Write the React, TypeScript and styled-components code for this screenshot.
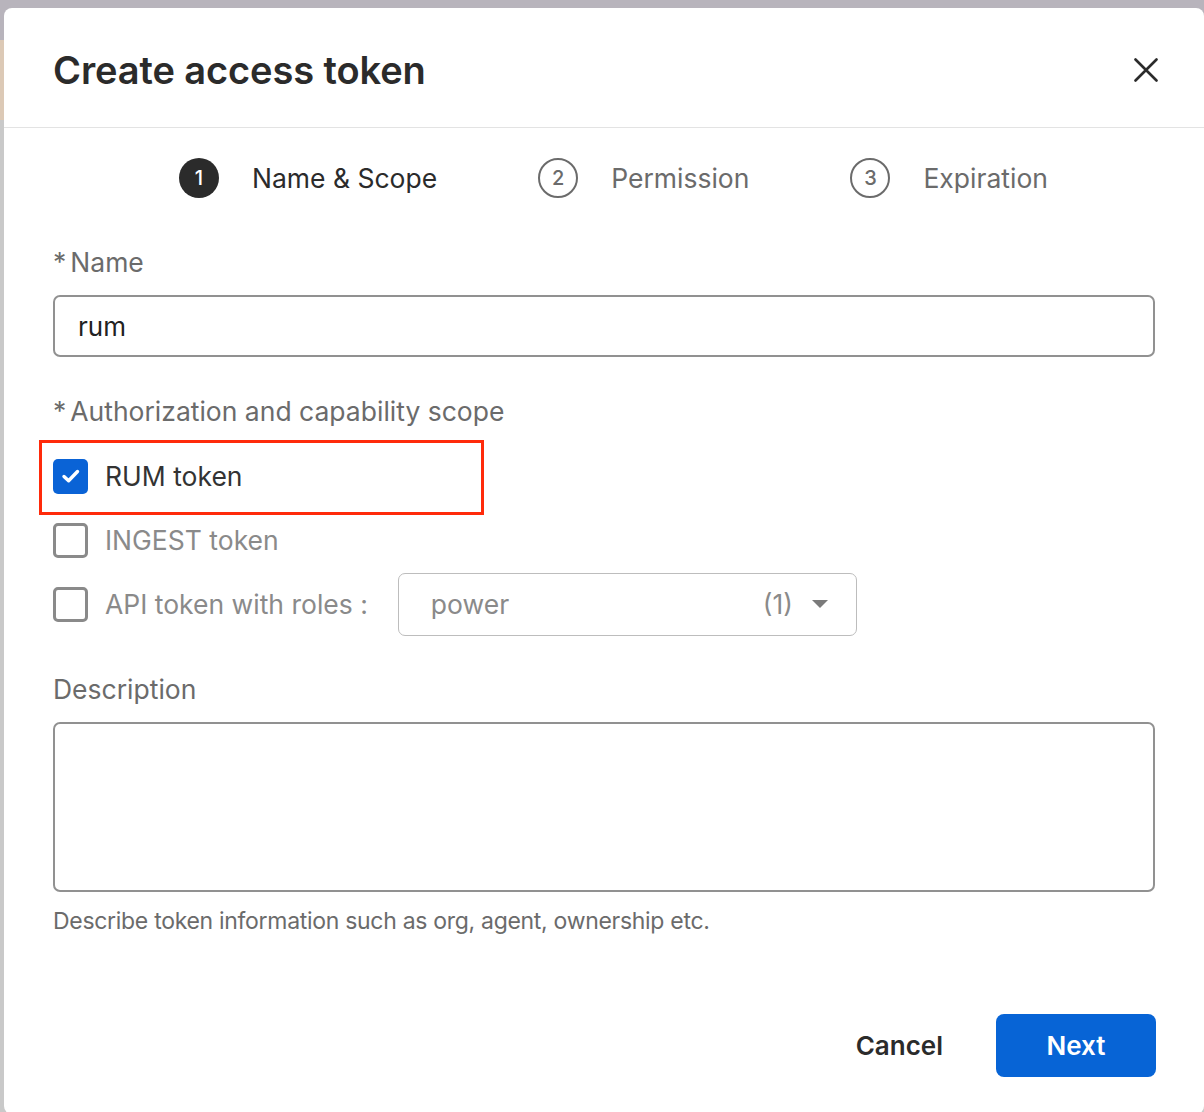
import React from 'react'
import styled, { createGlobalStyle } from 'styled-components'

const GlobalStyle = createGlobalStyle`
  html, body {
    margin: 0;
    padding: 0;
    height: 1112px;
    overflow: hidden;
  }
  body {
    font-family: Inter, "Noto Sans", "Liberation Sans", sans-serif;
    -webkit-font-smoothing: antialiased;
  }
`

const Backdrop = styled.div`
  height: 1112px;
  padding: 8px 0 0 4px;
  box-sizing: border-box;
  background:
    linear-gradient(to right, transparent 0 4px, #b8b4bc 4px) top / 100% 8px no-repeat,
    linear-gradient(to bottom, #b8b4bc 0 40px, #dcc9b6 40px 120px, #c9c9c9 120px);
`

const Modal = styled.div`
  width: 1200px;
  height: 1106px;
  background: #fff;
  border-radius: 8px;
  display: flex;
  flex-direction: column;
`

const Header = styled.div`
  height: 120px;
  box-sizing: border-box;
  padding: 4px 46px 0 49px;
  display: flex;
  align-items: center;
  justify-content: space-between;
  border-bottom: 1.5px solid #e3e3e3;
`

const Title = styled.h1`
  margin: 0;
  font-size: 38px;
  font-weight: 600;
  color: #2b2b2b;
  letter-spacing: -0.1px;
`

const CloseButton = styled.button`
  border: none;
  background: none;
  padding: 0;
  width: 24px;
  height: 24px;
  display: flex;
  cursor: pointer;
`

const Body = styled.div`
  padding: 30px 49px 0 49px;
  display: flex;
  flex-direction: column;
`

const Steps = styled.div`
  display: flex;
  align-items: center;
  gap: 101px;
  padding-left: 126px;
  margin-bottom: 48px;
`

const Step = styled.div`
  display: flex;
  align-items: center;
  gap: 33px;
`

const StepCircle = styled.div<{ $active?: boolean }>`
  width: 40px;
  height: 40px;
  box-sizing: border-box;
  border-radius: 50%;
  display: flex;
  align-items: center;
  justify-content: center;
  font-size: 20px;
  font-weight: 500;
  background: ${(p) => (p.$active ? '#2b2b2b' : '#fff')};
  color: ${(p) => (p.$active ? '#fff' : '#6b6b6b')};
  border: ${(p) => (p.$active ? 'none' : '2px solid #6b6b6b')};
`

const StepLabel = styled.span<{ $active?: boolean }>`
  font-size: 26.5px;
  color: ${(p) => (p.$active ? '#2b2b2b' : '#6b6b6b')};
`

const FieldLabel = styled.div<{ $gap?: number }>`
  font-size: 26.5px;
  line-height: 32px;
  color: #6b6b6b;
  margin-bottom: ${(p) => p.$gap ?? 17}px;
`

const Required = styled.span`
  margin-right: 4px;
`

const TextInput = styled.div`
  height: 62px;
  box-sizing: border-box;
  border: 2px solid #919191;
  border-radius: 7px;
  padding: 0 23px;
  display: flex;
  align-items: center;
  font-size: 26px;
  color: #222;
  margin-bottom: 38px;
`

const Options = styled.div`
  display: flex;
  flex-direction: column;
  gap: 2px;
  margin-bottom: 38px;
`

const OptionRow = styled.div`
  position: relative;
  height: 62px;
  display: flex;
  align-items: center;
`

const Highlight = styled.div`
  position: absolute;
  left: -14px;
  top: -5px;
  width: 445px;
  height: 75px;
  box-sizing: border-box;
  border: 3px solid #ff2a0a;
  pointer-events: none;
`

const Box = styled.span<{ $checked?: boolean }>`
  width: 35px;
  height: 35px;
  box-sizing: border-box;
  border-radius: 5px;
  display: flex;
  align-items: center;
  justify-content: center;
  background: ${(p) => (p.$checked ? '#0a63d6' : '#fff')};
  border: ${(p) => (p.$checked ? 'none' : '3px solid #8a8a8a')};
  margin-right: 17px;
`

const OptionLabel = styled.span<{ $checked?: boolean }>`
  font-size: 26.5px;
  color: ${(p) => (p.$checked ? '#333' : '#8a8a8a')};
`

const RoleSelect = styled.div`
  margin-left: 30px;
  width: 459px;
  height: 63px;
  box-sizing: border-box;
  border: 1.5px solid #bdbdbd;
  border-radius: 7px;
  padding: 0 27px 0 32px;
  display: flex;
  align-items: center;
  font-size: 26.5px;
  color: #8a8a8a;
`

const SelectValue = styled.span`
  flex: 1;
`

const SelectCount = styled.span`
  margin-right: 18px;
`

const TextArea = styled.div`
  height: 170px;
  box-sizing: border-box;
  border: 2px solid #919191;
  border-radius: 7px;
  margin-bottom: 15px;
`

const Helper = styled.div`
  font-size: 23px;
  line-height: 28px;
  color: #6b6b6b;
  letter-spacing: -0.3px;
`

const Footer = styled.div`
  margin-top: 79px;
  padding: 0 48px;
  display: flex;
  justify-content: flex-end;
  align-items: center;
  gap: 27px;
`

const FooterButton = styled.button<{ $primary?: boolean }>`
  font-family: inherit;
  font-size: 26px;
  font-weight: 600;
  height: 63px;
  border: none;
  border-radius: 8px;
  cursor: pointer;
  padding: 0 26px;
  min-width: ${(p) => (p.$primary ? '160px' : 'auto')};
  background: ${(p) => (p.$primary ? '#0764d6' : 'transparent')};
  color: ${(p) => (p.$primary ? '#fff' : '#2b2b2b')};
`

const CheckIcon = () => (
  <svg width="22" height="22" viewBox="0 0 22 22">
    <path d="M4 11.5 L8.6 15.8 L17.5 6.5" fill="none" stroke="#fff" strokeWidth="3.4" strokeLinecap="round" strokeLinejoin="round" />
  </svg>
)

const CloseIcon = () => (
  <svg width="24" height="24" viewBox="0 0 24 24">
    <path d="M1.5 1.5 L22.5 22.5 M22.5 1.5 L1.5 22.5" stroke="#2b2b2b" strokeWidth="2.6" strokeLinecap="round" />
  </svg>
)

const Caret = () => (
  <svg width="18" height="10" viewBox="0 0 18 10">
    <path d="M1 1 L17 1 L9 9 Z" fill="#7a7a7a" />
  </svg>
)

const steps = [
  { n: 1, label: 'Name & Scope', active: true },
  { n: 2, label: 'Permission' },
  { n: 3, label: 'Expiration' },
]

export default function App() {
  return (
    <>
      <GlobalStyle />
      <Backdrop>
        <Modal>
          <Header>
            <Title>Create access token</Title>
            <CloseButton aria-label="Close">
              <CloseIcon />
            </CloseButton>
          </Header>
          <Body>
            <Steps>
              {steps.map((s) => (
                <Step key={s.n}>
                  <StepCircle $active={s.active}>{s.n}</StepCircle>
                  <StepLabel $active={s.active}>{s.label}</StepLabel>
                </Step>
              ))}
            </Steps>

            <FieldLabel>
              <Required>*</Required>Name
            </FieldLabel>
            <TextInput>rum</TextInput>

            <FieldLabel $gap={18}>
              <Required>*</Required>Authorization and capability scope
            </FieldLabel>
            <Options>
              <OptionRow>
                <Highlight />
                <Box $checked>
                  <CheckIcon />
                </Box>
                <OptionLabel $checked>RUM token</OptionLabel>
              </OptionRow>
              <OptionRow>
                <Box />
                <OptionLabel>INGEST token</OptionLabel>
              </OptionRow>
              <OptionRow>
                <Box />
                <OptionLabel>API token with roles :</OptionLabel>
                <RoleSelect>
                  <SelectValue>power</SelectValue>
                  <SelectCount>(1)</SelectCount>
                  <Caret />
                </RoleSelect>
              </OptionRow>
            </Options>

            <FieldLabel>Description</FieldLabel>
            <TextArea />
            <Helper>Describe token information such as org, agent, ownership etc.</Helper>
          </Body>
          <Footer>
            <FooterButton>Cancel</FooterButton>
            <FooterButton $primary>Next</FooterButton>
          </Footer>
        </Modal>
      </Backdrop>
    </>
  )
}
